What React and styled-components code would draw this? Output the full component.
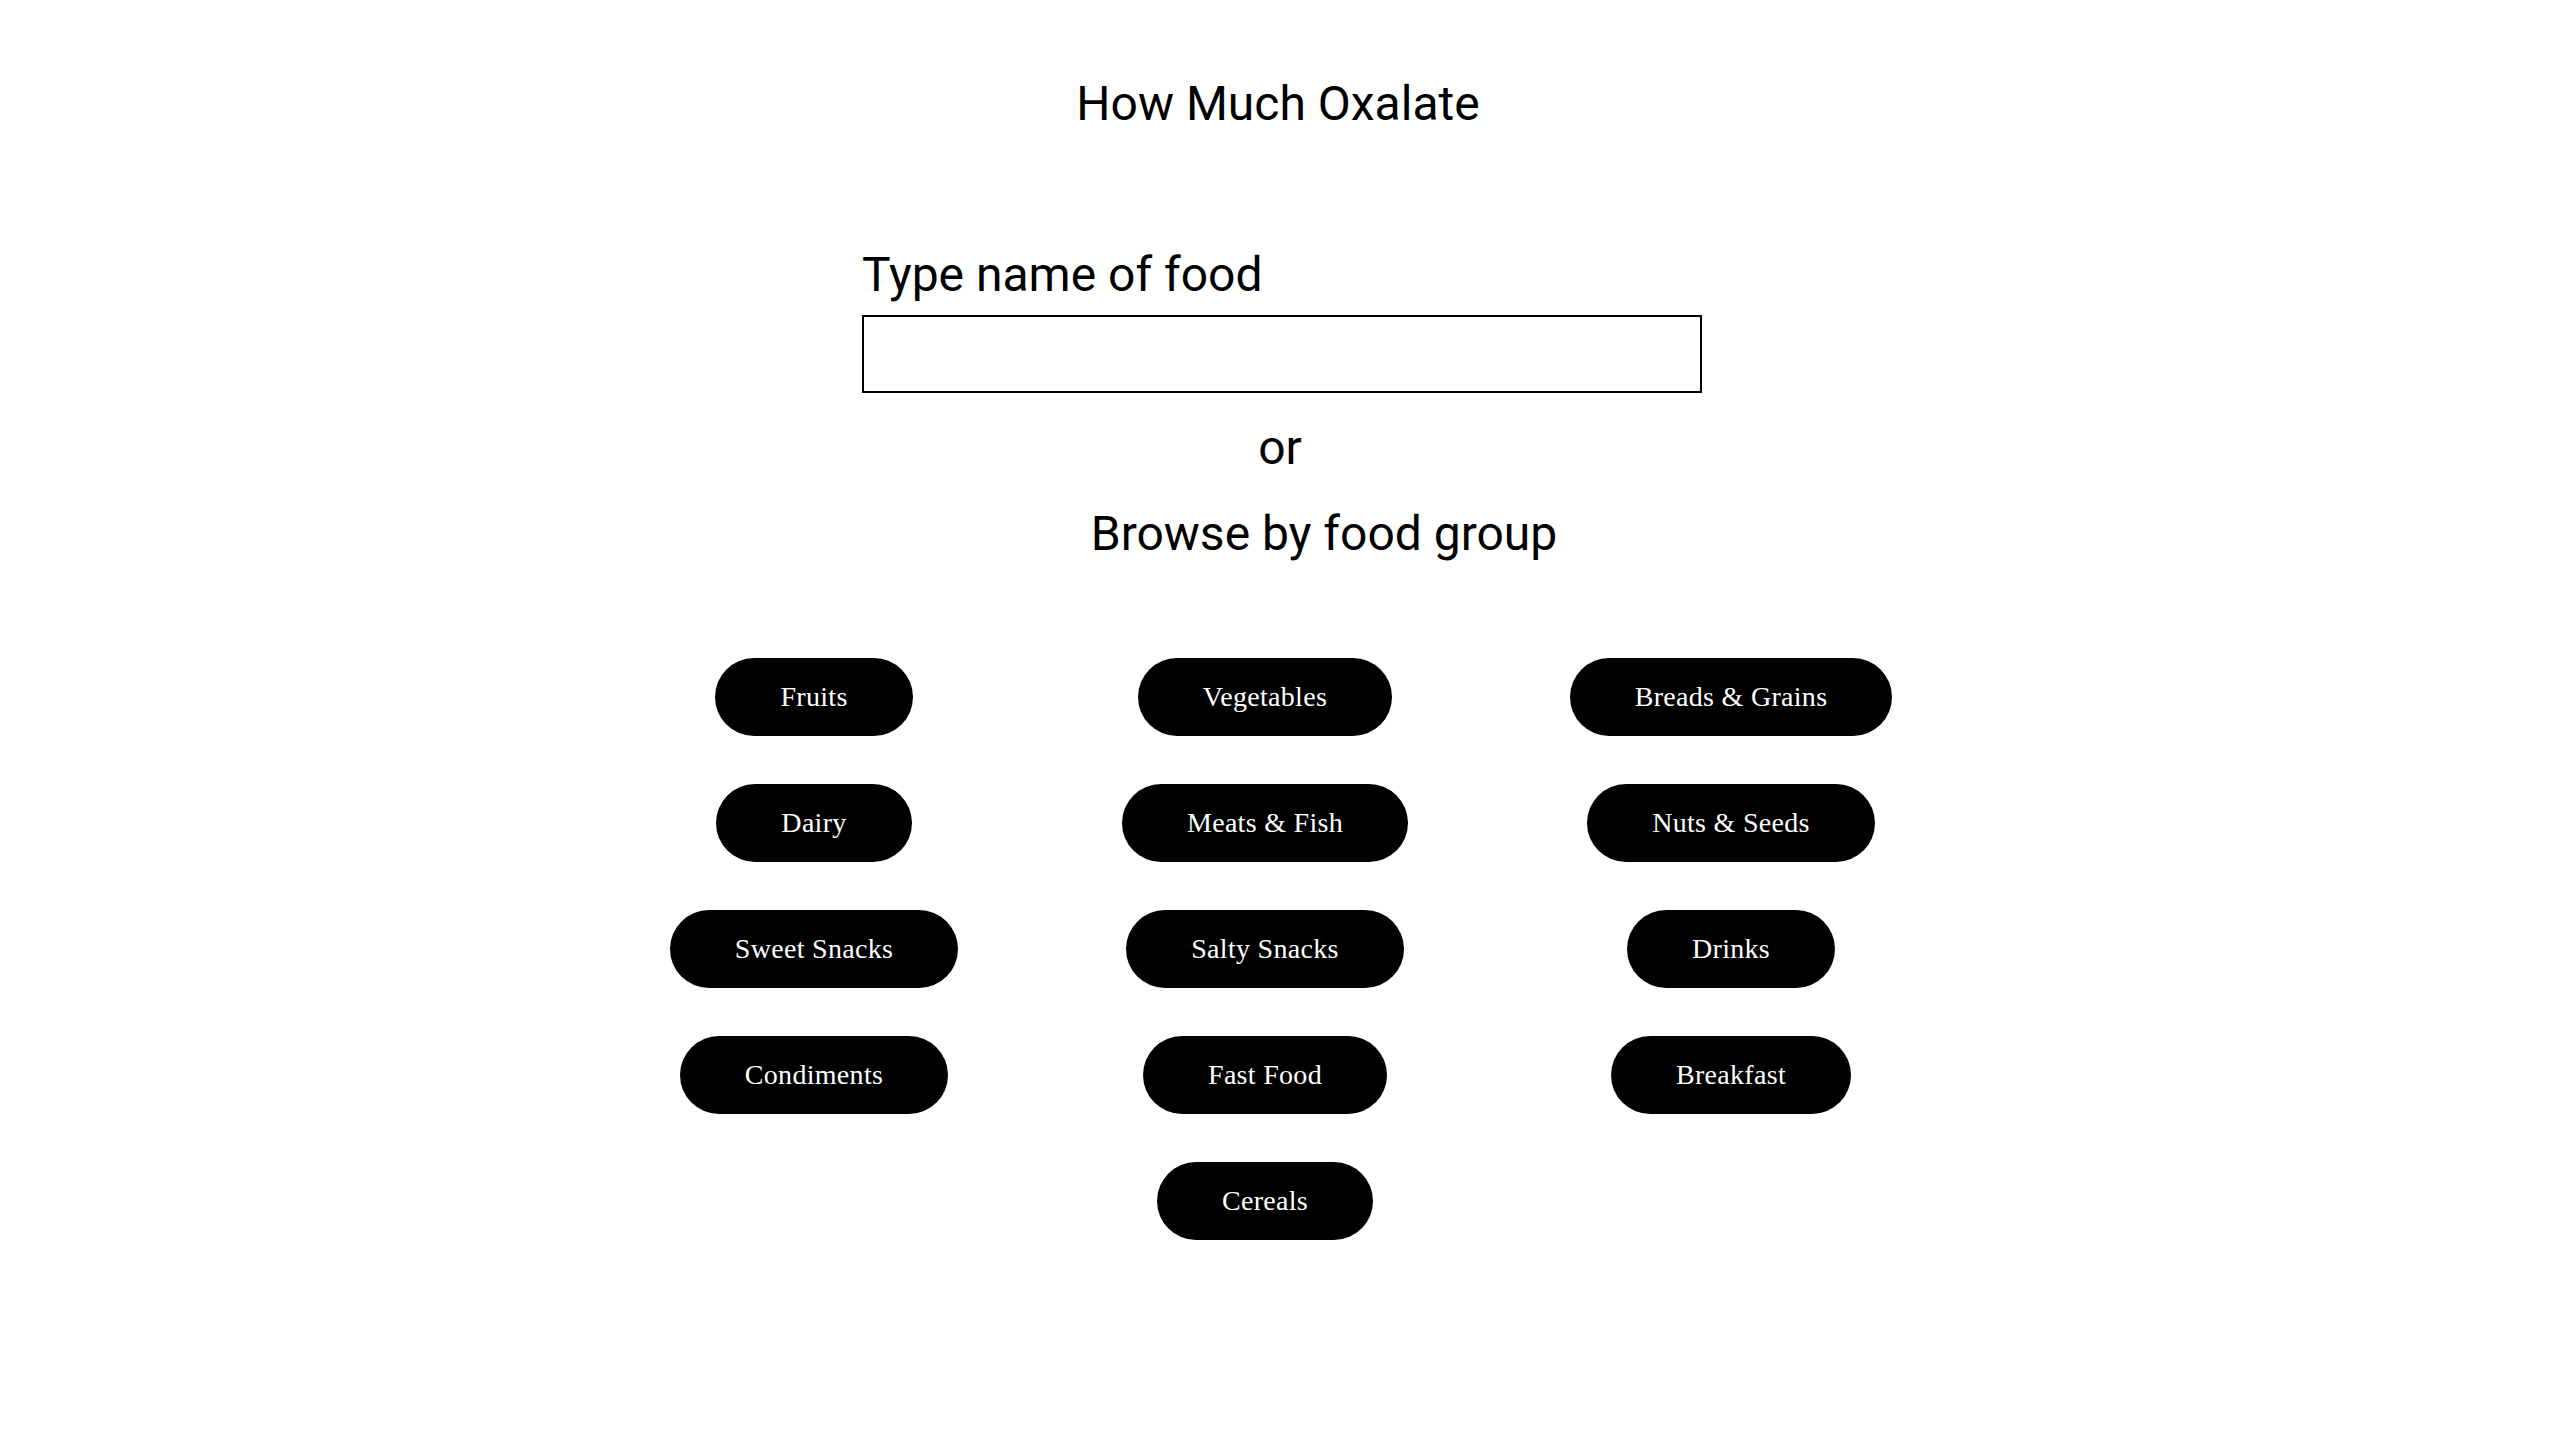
import styled, { createGlobalStyle } from 'styled-components';

const GlobalStyle = createGlobalStyle`
  html, body {
    margin: 0;
    padding: 0;
    background: #ffffff;
  }

  body {
    font-family: Roboto, 'Liberation Sans', sans-serif;
    color: #000000;
  }
`;

const Page = styled.main`
  display: flex;
  flex-direction: column;
  align-items: center;
  padding-top: 76px;
  padding-bottom: 120px;
`;

const Title = styled.h1`
  margin: 0 4px 0 0;
  font-size: 48px;
  font-weight: 400;
  line-height: 56px;
`;

const SearchForm = styled.form`
  display: flex;
  flex-direction: column;
  width: 840px;
  margin-top: 115px;
  margin-left: 4px;
`;

const Label = styled.label`
  font-size: 48px;
  line-height: 56px;
  margin-bottom: 12px;
`;

const SearchInput = styled.input`
  box-sizing: border-box;
  height: 78px;
  width: 100%;
  border: 2px solid #000000;
  border-radius: 0;
  padding: 0 16px;
  font-family: Roboto, sans-serif;
  font-size: 32px;
  outline: none;
`;

const Or = styled.p`
  margin: 27px 0 0;
  font-size: 48px;
  line-height: 56px;
`;

const Subtitle = styled.h2`
  margin: 30px 0 0;
  padding-left: 88px;
  font-size: 48px;
  font-weight: 400;
  line-height: 56px;
`;

const GroupGrid = styled.div`
  display: grid;
  grid-template-columns: 292px 286px 322px;
  justify-items: center;
  column-gap: 162px;
  row-gap: 48px;
  margin-top: 96px;
`;

const GroupButton = styled.button`
  grid-column: ${(p) => p.$col || 'auto'};
  height: 78px;
  padding: 0 65px;
  border: none;
  border-radius: 999px;
  background: #000000;
  color: #ffffff;
  font-family: 'Liberation Serif', 'DejaVu Serif', serif;
  font-size: 28px;
  letter-spacing: 0.3px;
  white-space: nowrap;
  cursor: pointer;
`;

const groups = [
  'Fruits',
  'Vegetables',
  'Breads & Grains',
  'Dairy',
  'Meats & Fish',
  'Nuts & Seeds',
  'Sweet Snacks',
  'Salty Snacks',
  'Drinks',
  'Condiments',
  'Fast Food',
  'Breakfast',
];

const App = () => {
  return (
    <>
      <GlobalStyle />
      <Page>
        <Title>How Much Oxalate</Title>
        <SearchForm onSubmit={(e) => e.preventDefault()}>
          <Label htmlFor="food">Type name of food</Label>
          <SearchInput id="food" type="text" />
        </SearchForm>
        <Or>or</Or>
        <Subtitle>Browse by food group</Subtitle>
        <GroupGrid>
          {groups.map((g) => (
            <GroupButton key={g}>{g}</GroupButton>
          ))}
          <GroupButton $col="2">Cereals</GroupButton>
        </GroupGrid>
      </Page>
    </>
  );
};

export default App;
